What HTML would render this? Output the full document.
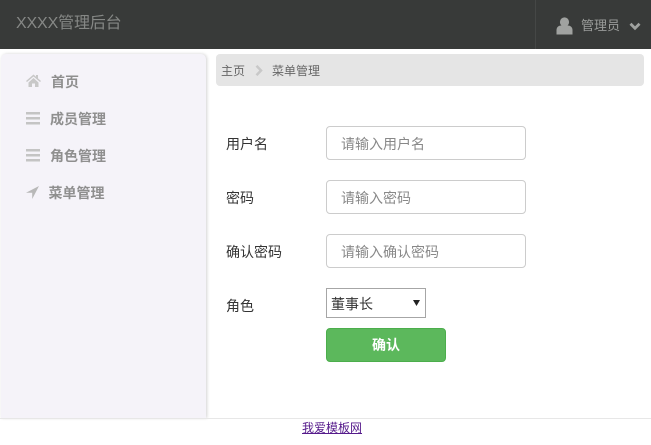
<!DOCTYPE html>
<html lang="zh">
<head>
<meta charset="utf-8">
<style>
html,body{margin:0;padding:0;width:651px;height:445px;overflow:hidden;background:#fff;font-family:"Liberation Sans","Noto Sans CJK SC",sans-serif;}
div,span,a,svg{position:absolute;white-space:nowrap}
#top{left:0;top:0;width:651px;height:49px;background:#383a39}
#brand{left:16px;top:12px;font-size:16px;line-height:24px;color:#868886;letter-spacing:-.15px}
#sep{left:535px;top:0;width:1px;height:49px;background:#454746}
#admin{left:581px;top:17px;font-size:13px;line-height:18px;color:#9a9c9a}
#side{left:1px;top:54px;width:205px;height:364px;background:#f5f3f9;border-radius:5px 5px 0 0;box-shadow:1px 0 3px rgba(0,0,0,.18)}
.nav{font-size:14px;line-height:18px;font-weight:bold;color:#8f8f8f}
#crumb{left:216px;top:54px;width:428px;height:32px;background:#e5e5e5;border-radius:4px}
.cr{top:63px;font-size:12px;line-height:17px;color:#666}
.lb{left:226px;font-size:14px;line-height:20px;color:#333}
.inp{left:326px;width:198px;height:32px;border:1px solid #ccc;border-radius:4px;background:#fff}
.ph{left:341px;font-size:14px;line-height:20px;color:#888}
#sel{left:326px;top:288px;width:98px;height:28px;border:1px solid #a6a6a6;background:#fff}
#seltx{left:331px;top:295px;font-size:14px;line-height:19px;color:#333}
#btn{left:326px;top:328px;width:118px;height:32px;background:#5cb85c;border:1px solid #4cae4c;border-radius:4px}
#btntx{left:372px;top:336px;font-size:14px;line-height:18px;font-weight:bold;color:#fff}
#foot{left:0;top:418px;width:651px;height:1px;background:#e7e7e7}
#link{left:302px;top:420px;font-size:12px;line-height:17px;color:#551a8b;text-decoration:underline}
</style>
</head>
<body>
<div id="top"></div>
<div id="brand">XXXX管理后台</div>
<div id="sep"></div>
<svg style="left:556px;top:17px" width="17" height="18" viewBox="0 0 17 18"><circle cx="8.5" cy="5" r="4.6" fill="#a0a2a0"/><path d="M0.500 17.500V13c0-3 2.500-4.500 4.500-4.500h7c2 0 4.500 1.500 4.500 4.500v4.500z" fill="#a0a2a0"/></svg>
<div id="admin">管理员</div>
<svg style="left:629px;top:22px" width="12" height="9" viewBox="0 0 12 9"><path d="M1.500 1.800L6 6.300L10.500 1.800" fill="none" stroke="#a0a2a0" stroke-width="2.800"/></svg>

<div id="side"></div>
<svg style="left:26px;top:74px" width="15" height="13" viewBox="0 0 15 13"><path d="M7.500 0.500L0 7l1 1L7.500 2.500 14 8l1-1-3-2.600V1h-2v1.700zM2.500 8.500V13h3.500V9.500h3V13h3.500V8.500L7.500 4z" fill="#c8c8c8"/></svg>
<div class="nav" style="left:51px;top:73px">首页</div>
<svg style="left:26px;top:112px" width="14" height="13" viewBox="0 0 14 13"><path d="M0 0h14v2.500H0zM0 5h14v2.500H0zM0 10h14v2.500H0z" fill="#c4c4c4"/></svg>
<div class="nav" style="left:50px;top:110px">成员管理</div>
<svg style="left:26px;top:149px" width="14" height="13" viewBox="0 0 14 13"><path d="M0 0h14v2.500H0zM0 5h14v2.500H0zM0 10h14v2.500H0z" fill="#c4c4c4"/></svg>
<div class="nav" style="left:50px;top:147px">角色管理</div>
<svg style="left:26px;top:186px" width="13" height="13" viewBox="0 0 13 13"><path d="M13 0L0 6.800h6.200V13z" fill="#b8b8b8"/></svg>
<div class="nav" style="left:48.500px;top:184px">菜单管理</div>

<div id="crumb"></div>
<div class="cr" style="left:221px">主页</div>
<svg style="left:255px;top:65px" width="9" height="11" viewBox="0 0 9 11"><path d="M1.500 0.800L6 5.500L1.500 10.200" fill="none" stroke="#c8c8c8" stroke-width="2.500"/></svg>
<div class="cr" style="left:272px">菜单管理</div>

<div class="lb" style="top:134px">用户名</div>
<div class="inp" style="top:126px"></div>
<div class="ph" style="top:134px">请输入用户名</div>

<div class="lb" style="top:188px">密码</div>
<div class="inp" style="top:180px"></div>
<div class="ph" style="top:188px">请输入密码</div>

<div class="lb" style="top:242px">确认密码</div>
<div class="inp" style="top:234px"></div>
<div class="ph" style="top:242px">请输入确认密码</div>

<div class="lb" style="top:296px">角色</div>
<div id="sel"></div>
<div id="seltx">董事长</div>
<svg style="left:413px;top:300px" width="7" height="6" viewBox="0 0 7 6"><path d="M0 0h7L3.500 6z" fill="#222"/></svg>

<div id="btn"></div>
<div id="btntx">确认</div>

<div id="foot"></div>
<a id="link">我爱模板网</a>
</body>
</html>
